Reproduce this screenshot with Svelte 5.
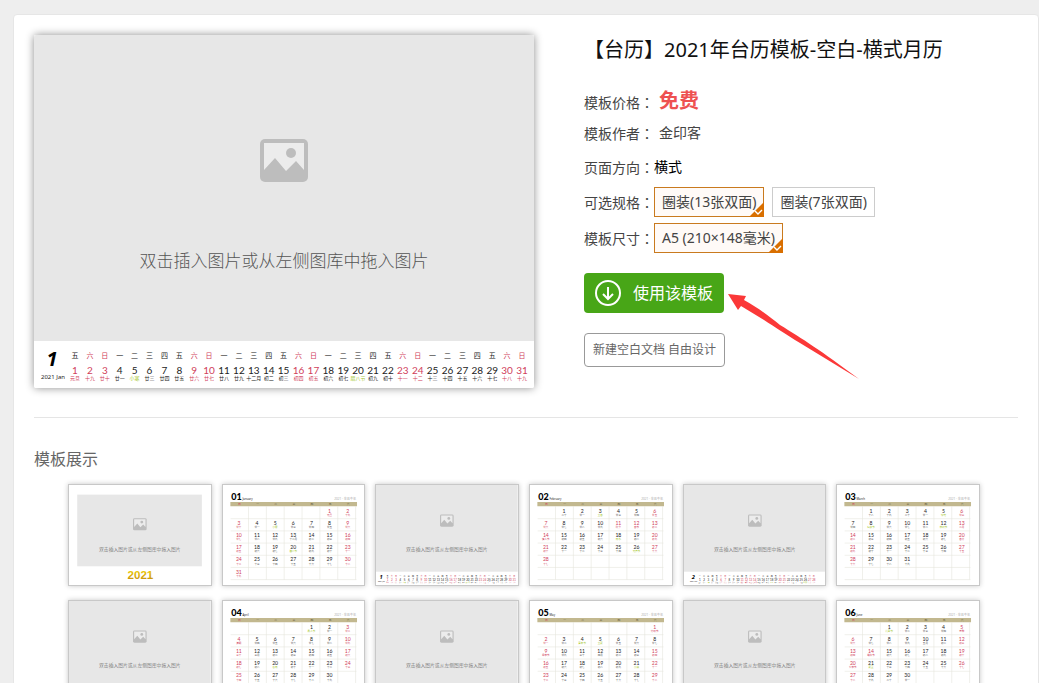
<script>
  const week = ['日', '一', '二', '三', '四', '五', '六'];
  const monthNames = ['January', 'February', 'March', 'April', 'May', 'June'];
  const shortNames = ['Jan', 'Feb', 'Mar', 'Apr', 'May', 'Jun'];
  const digits = ['一', '二', '三', '四', '五', '六', '七', '八', '九', '十'];

  // First day of each lunar month that touches the first half of 2021.
  const lunarStarts = [
    [Date.UTC(2020, 11, 15), '十一月'],
    [Date.UTC(2021, 0, 13), '十二月'],
    [Date.UTC(2021, 1, 12), '春节'],
    [Date.UTC(2021, 2, 13), '二月'],
    [Date.UTC(2021, 3, 12), '三月'],
    [Date.UTC(2021, 4, 12), '四月'],
    [Date.UTC(2021, 5, 10), '五月']
  ];
  const festivals = {
    '1-1': '元旦', '1-3': '廿十', '1-5': '小寒', '1-20': '腊八节', '2-3': '立春', '2-11': '除夕', '2-14': '情人节',
    '2-18': '雨水', '2-26': '元宵节', '3-5': '惊蛰', '3-8': '妇女节', '3-12': '植树节',
    '3-20': '春分', '4-1': '愚人节', '4-4': '清明', '4-20': '谷雨', '5-1': '劳动节',
    '5-4': '青年节', '5-5': '立夏', '5-9': '母亲节', '5-21': '小满', '6-1': '儿童节',
    '6-5': '芒种', '6-14': '端午节', '6-20': '父亲节', '6-21': '夏至'
  };
  const green = ['1-5', '1-20', '2-3', '2-18', '2-26', '3-5', '3-8', '3-12', '4-1', '4-20', '5-4', '5-5', '5-21', '6-1', '6-21'];
  const holidays = ['1-1', '2-11', '2-12', '6-14'];
  const workdays = ['3-7', '5-8'];

  function lunar(month, day) {
    const key = `${month}-${day}`;
    if (festivals[key]) return festivals[key];
    const t = Date.UTC(2021, month - 1, day);
    const start = lunarStarts.filter((s) => s[0] <= t).at(-1);
    const n = (t - start[0]) / 86400000 + 1;
    if (n === 1) return start[1];
    if (n <= 10) return '初' + digits[n - 1];
    if (n < 20) return '十' + digits[n - 11];
    if (n === 20) return '二十';
    if (n < 30) return '廿' + digits[n - 21];
    return '三十';
  }

  function daysOf(month) {
    const count = new Date(Date.UTC(2021, month, 0)).getUTCDate();
    const first = new Date(Date.UTC(2021, month - 1, 1)).getUTCDay();
    return Array.from({ length: count }, (_, i) => {
      const key = `${month}-${i + 1}`;
      const dow = (first + i) % 7;
      const weekend = dow === 0 || dow === 6;
      return {
        day: i + 1,
        dow,
        row: Math.floor((first + i) / 7),
        weekend,
        red: (weekend && !workdays.includes(key)) || holidays.includes(key),
        green: green.includes(key),
        lunar: lunar(month, i + 1)
      };
    });
  }

  const pages = [
    { kind: 'cover' },
    { kind: 'month', month: 1 },
    { kind: 'photo', month: 1 },
    { kind: 'month', month: 2 },
    { kind: 'photo', month: 2 },
    { kind: 'month', month: 3 },
    { kind: 'photo', month: 3 },
    { kind: 'month', month: 4 },
    { kind: 'photo', month: 4 },
    { kind: 'month', month: 5 },
    { kind: 'photo', month: 5 },
    { kind: 'month', month: 6 }
  ];

  const specs = ['圈装(13张双面)', '圈装(7张双面)'];
  const sizes = ['A5 (210×148毫米)'];
  let spec = $state(0);
  let size = $state(0);
</script>

{#snippet picture(y)}
  <g transform="translate(226 {y})">
    <rect width="48" height="43" rx="5" fill="#bdbdbd" />
    <path d="M4 4H44V31L36 22L26 32L15 19L4 31Z" fill="#ececec" />
    <circle cx="31" cy="14" r="5" fill="#bdbdbd" />
  </g>
{/snippet}

{#snippet photoPage(month)}
  {@const days = daysOf(month)}
  {@const shift = (31 - days.length) * 5}
  <svg class="art" viewBox="0 0 500 353" role="img" aria-label="{month}月图片页">
    <rect width="500" height="353" fill="#fff" />
    <rect width="500" height="306" fill="#e7e7e7" />
    {@render picture(104)}
    <text class="hint" x="250" y="232">双击插入图片或从左侧图库中拖入图片</text>
    <text class="big" x={18 + shift} y="331">{month}</text>
    <text class="year" x={19 + shift} y="344">2021 {shortNames[month - 1]}</text>
    {#each days as d, i}
      {@const x = 41 + shift + i * 14.9}
      <text class="wk" class:red={d.weekend} {x} y="323">{week[d.dow]}</text>
      <text class="num" class:red={d.red} {x} y="339">{d.day}</text>
      <text class="lun" class:red={d.red} class:green={d.green} {x} y="345">{d.lunar}</text>
    {/each}
  </svg>
{/snippet}

{#snippet monthPage(month)}
  <svg class="art" viewBox="0 0 500 353" role="img" aria-label="{month}月月历页">
    <rect width="500" height="353" fill="#fff" />
    <text class="mm" x="29" y="52">0{month}</text>
    <text class="mname" x="69" y="52">{monthNames[month - 1]}</text>
    <text class="myear" x="470" y="54">2021 · 辛丑牛年</text>
    {#each [1, 2, 3, 4, 5, 6] as r}
      <path d="M27 {76 + r * 43}H471" stroke="#e4e4dc" stroke-width="2" />
    {/each}
    {#each [1, 2, 3, 4, 5, 6, 7] as c}
      <path d="M{27 + c * 63} 76V334" stroke="#e4e4dc" stroke-width="2" />
    {/each}
    <rect x="26" y="60" width="447" height="15" fill="#c2b88f" />
    {#each week as w, i}
      <text class="head" class:red={i === 0} x={58 + i * 64} y="71">{w}</text>
    {/each}
    {#each daysOf(month) as d}
      <text class="mday" class:red={d.red} x={56 + d.dow * 64} y={98 + d.row * 43}>{d.day}</text>
      <text class="mlun" class:red={d.red} class:green={d.green} x={56 + d.dow * 64} y={109 + d.row * 43}>{d.lunar}</text>
    {/each}
  </svg>
{/snippet}

{#snippet coverPage()}
  <svg class="art" viewBox="0 0 500 353" role="img" aria-label="封面">
    <defs>
      <linearGradient id="gold" x1="0" y1="0" x2="0" y2="1">
        <stop offset="0" stop-color="#f5d800" />
        <stop offset="1" stop-color="#c48a10" />
      </linearGradient>
    </defs>
    <rect width="500" height="353" fill="#fff" />
    <rect x="29" y="34" width="440" height="253" fill="#e7e7e7" />
    {@render picture(117)}
    <text class="hint" x="250" y="232">双击插入图片或从左侧图库中拖入图片</text>
    <text class="gold" x="252" y="333">2021</text>
  </svg>
{/snippet}

{#snippet label(text)}
  <span class="label">{text}<span class="colon">：</span></span>
{/snippet}

{#snippet option(text, on, pick)}
  <button type="button" class="option" class:on aria-pressed={on} onclick={pick}>
    {text}
    {#if on}
      <svg class="tick" viewBox="0 0 15 15" aria-hidden="true">
        <path d="M15 0V15H0Z" fill="#d96f00" />
        <path d="M6 9L9 12L13 8" fill="none" stroke="#fff" stroke-width="1.4" />
      </svg>
    {/if}
  </button>
{/snippet}

<main class="page">
  <div class="panel">
    <section class="top">
      <div class="preview">{@render photoPage(1)}</div>

      <div class="info">
        <h1>【台历】2021年台历模板-空白-横式月历</h1>
        <div class="row price">{@render label('模板价格')}<strong>免费</strong></div>
        <div class="row author">{@render label('模板作者')}<span>金印客</span></div>
        <div class="row direction">{@render label('页面方向')}<span>横式</span></div>
        <div class="row options">
          {@render label('可选规格')}
          {#each specs as s, i}{@render option(s, spec === i, () => (spec = i))}{/each}
        </div>
        <div class="row options">
          {@render label('模板尺寸')}
          {#each sizes as s, i}{@render option(s, size === i, () => (size = i))}{/each}
        </div>

        <div class="action">
          <button type="button" class="use">
            <svg viewBox="0 0 26 26" aria-hidden="true">
              <circle cx="13" cy="13" r="12" />
              <path d="M13 7V19M8 14L13 19L18 14" />
            </svg>
            使用该模板
          </button>
          <svg class="arrow" viewBox="0 0 132 86" aria-hidden="true">
            <path d="M0 0L18 2L16 6C32 15 42 23 52 31C75 45 92 56 131 85L72 49C57 40 47 33 36 26L13 12L10 16Z" fill="#fb3838" />
          </svg>
        </div>
        <button type="button" class="blank">新建空白文档 自由设计</button>
      </div>
    </section>

    <section class="gallery">
      <h2>模板展示</h2>
      <div class="thumbs">
        {#each pages as p}
          <div class="thumb">
            {#if p.kind === 'cover'}{@render coverPage()}
            {:else if p.kind === 'month'}{@render monthPage(p.month)}
            {:else}{@render photoPage(p.month)}{/if}
          </div>
        {/each}
      </div>
    </section>
  </div>
</main>

<style>
  :global(body) {
    margin: 0;
    background: #eee;
  }
  .page {
    padding: 14px 0 0 13px;
    font: 14px/20px 'Noto Sans', 'Noto Sans CJK SC', sans-serif;
    color: #444;
  }
  .panel {
    padding: 20px;
    border: 1px solid #e6e6e6;
    border-radius: 4px;
    background: #fff;
  }
  .top {
    display: grid;
    grid-template-columns: 500px 1fr;
    gap: 50px;
    padding-bottom: 29px;
    border-bottom: 1px solid #e5e5e5;
  }
  .preview {
    align-self: start;
    border-radius: 2px;
    overflow: hidden;
    box-shadow: 0 0 8px rgba(0, 0, 0, 0.45);
  }
  .art {
    display: block;
    width: 100%;
  }
  .info {
    display: flex;
    flex-direction: column;
    align-items: flex-start;
  }
  h1 {
    margin: 0 0 18px;
    font-size: 20px;
    line-height: 30px;
    font-weight: 400;
    color: #111;
  }
  .row {
    display: flex;
    align-items: center;
  }
  .label {
    width: 70px;
  }
  .colon {
    font-family: 'Noto Sans CJK TC', sans-serif;
  }
  .price {
    height: 36px;
    gap: 5px;
  }
  .price .label {
    padding-top: 2px;
  }
  .price strong {
    font-size: 20px;
    line-height: 28px;
    color: #ee5151;
  }
  .author {
    height: 28px;
    gap: 5px;
  }
  .direction {
    height: 40px;
    color: #444;
  }
  .direction > span:last-child {
    color: #000;
  }
  .options {
    margin-bottom: 6px;
  }
  .option {
    position: relative;
    box-sizing: border-box;
    height: 30px;
    margin: 0 8px 0 0;
    padding: 0 7px;
    border: 1px solid #ccc;
    background: #fff;
    color: #444;
    font: inherit;
    cursor: pointer;
  }
  .option.on {
    border-color: #c97a1e;
    background: #fffaf7;
  }
  .tick {
    position: absolute;
    right: -1px;
    bottom: -1px;
    width: 15px;
    height: 15px;
  }
  .action {
    position: relative;
    margin: 14px 0 20px;
  }
  .use {
    display: flex;
    align-items: center;
    gap: 12px;
    height: 40px;
    padding: 0 11px;
    border: 0;
    border-radius: 4px;
    background: #48a617;
    color: #fff;
    font: inherit;
    font-size: 16px;
    cursor: pointer;
  }
  .use svg {
    width: 26px;
    height: 26px;
    fill: none;
    stroke: #fff;
    stroke-width: 2;
  }
  .arrow {
    position: absolute;
    left: 144px;
    top: 21px;
    width: 132px;
    height: 86px;
  }
  .blank {
    height: 34px;
    padding: 0 8px;
    border: 1px solid #999;
    border-radius: 4px;
    background: #fff;
    color: #666;
    font: inherit;
    font-size: 12px;
    cursor: pointer;
  }
  h2 {
    margin: 29px 0 13px;
    font-size: 16px;
    line-height: 24px;
    font-weight: 400;
    color: #666;
  }
  .thumbs {
    display: grid;
    grid-template-columns: repeat(6, 1fr);
    gap: 14px 10px;
    padding: 0 38px 0 34px;
  }
  .thumb {
    border: 1px solid #c8c8c8;
    box-shadow: 0 0 5px rgba(0, 0, 0, 0.22);
  }

  text {
    text-anchor: middle;
    fill: #222;
  }
  .hint {
    font-size: 17px;
    font-weight: 300;
    fill: #555;
  }
  .big {
    font-size: 20px;
    font-weight: 700;
    font-style: italic;
    fill: #000;
  }
  .year {
    font-size: 6px;
  }
  .wk {
    font-size: 7px;
  }
  .num {
    font-family: Lato, 'Noto Sans', sans-serif;
    font-size: 10px;
  }
  .lun {
    font-size: 5px;
  }
  .mm,
  .mname {
    text-anchor: start;
  }
  .mm {
    font-family: Lato, sans-serif;
    font-size: 32px;
    font-weight: 900;
    fill: #000;
  }
  .mname {
    font-size: 10px;
  }
  .myear {
    text-anchor: end;
    font-size: 11px;
    fill: #aaa;
  }
  .head {
    font-size: 10px;
    fill: #6b6340;
  }
  .mday {
    font-family: Lato, 'Noto Sans', sans-serif;
    font-size: 18px;
  }
  .mlun {
    font-size: 9px;
    fill: #555;
  }
  .gold {
    font-family: 'Liberation Sans', sans-serif;
    font-size: 41px;
    font-weight: 700;
    fill: url(#gold);
  }
  text.red {
    fill: #d0405a;
  }
  text.green {
    fill: #a5c72c;
  }
</style>
